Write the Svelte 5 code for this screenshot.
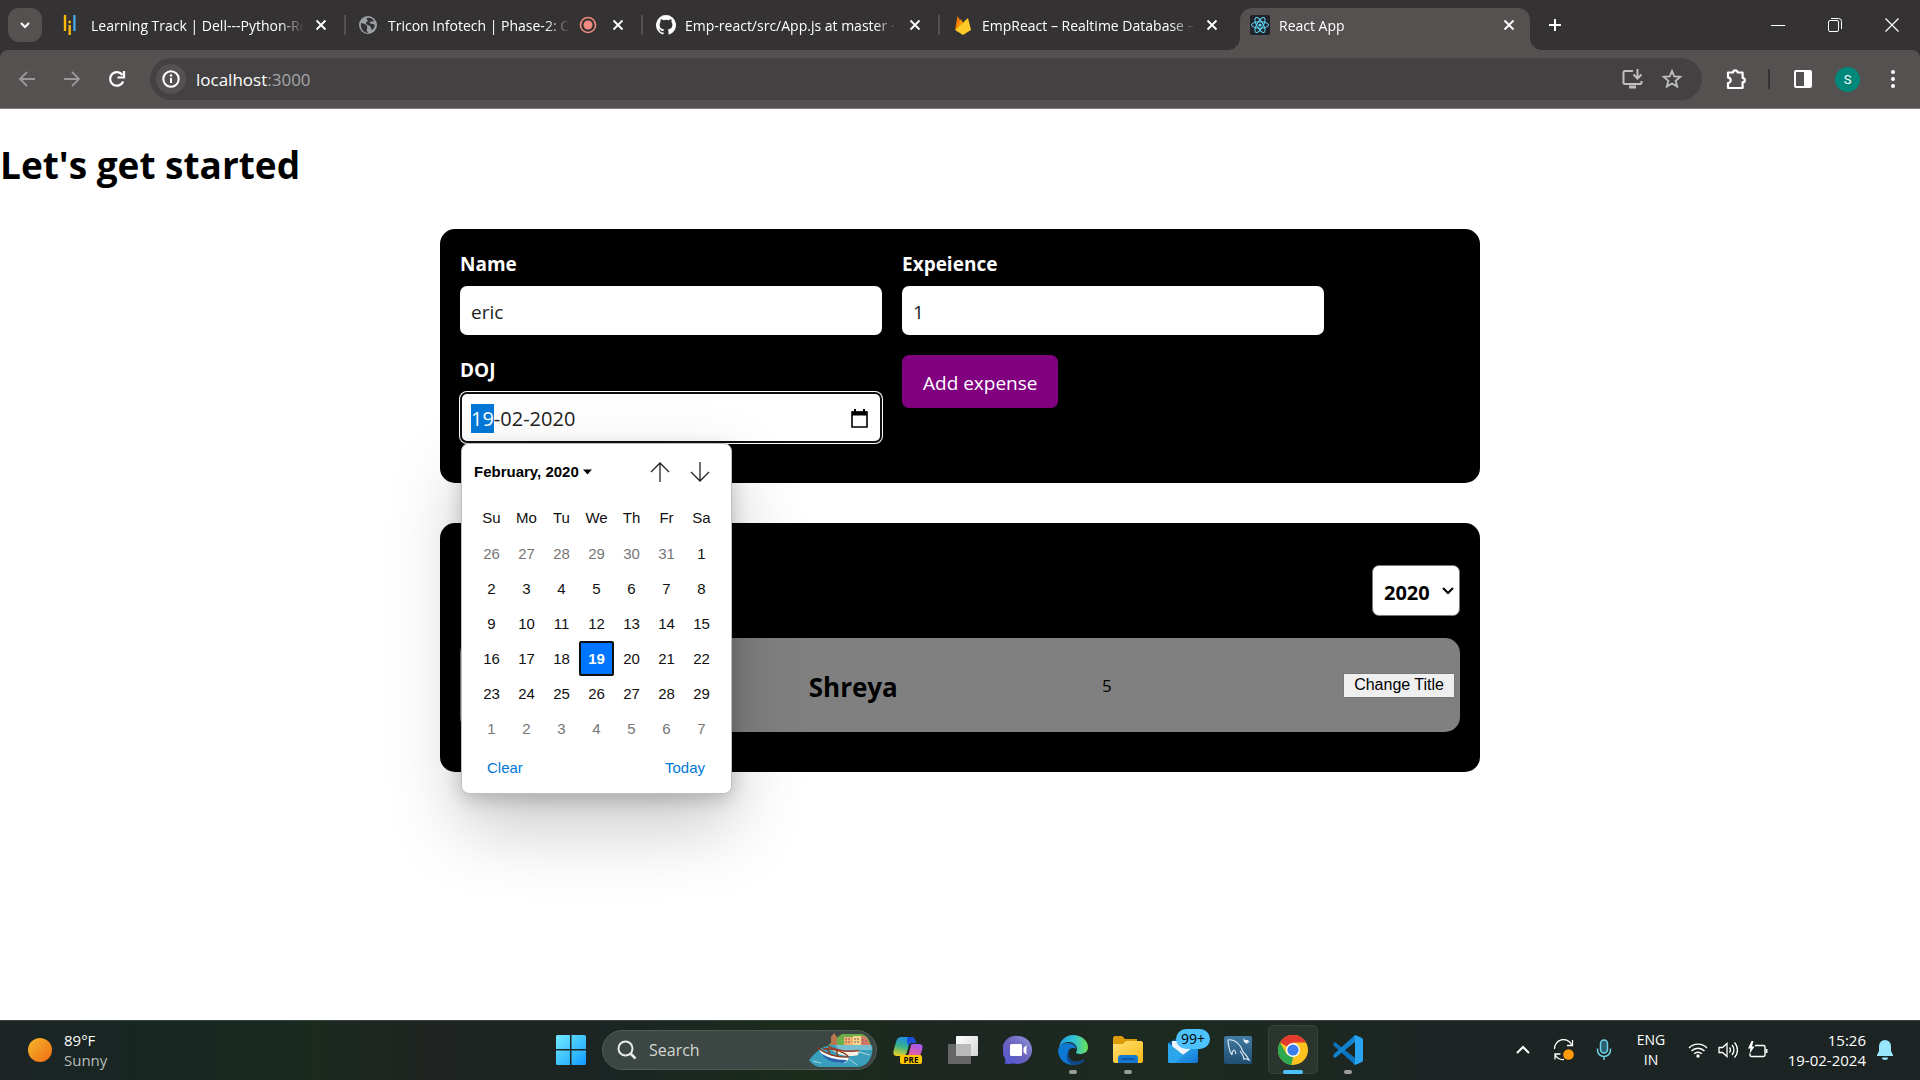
<script>
  import { onMount } from 'svelte';

  const tabs = [
    { icon: 'track', title: 'Learning Track | Dell---Python-React' },
    { icon: 'globe', title: 'Tricon Infotech | Phase-2: Crud', recording: true },
    { icon: 'github', title: 'Emp-react/src/App.js at master · Emp' },
    { icon: 'firebase', title: 'EmpReact – Realtime Database – Fire' },
    { icon: 'react', title: 'React App', active: true }
  ];

  const weekdays = ['Su', 'Mo', 'Tu', 'We', 'Th', 'Fr', 'Sa'];
  // 42 cells, beginning on Sunday 26 January 2020
  const start = new Date(2020, 0, 26);
  const weeks = Array.from({ length: 6 }, (_, w) =>
    Array.from({ length: 7 }, (_, d) => {
      const date = new Date(start.getFullYear(), start.getMonth(), start.getDate() + w * 7 + d);
      return { day: date.getDate(), inMonth: date.getMonth() === 1 };
    })
  );

  const apps = [
    { id: 'copilot', label: 'Copilot' },
    { id: 'taskview', label: 'Task view' },
    { id: 'chat', label: 'Chat' },
    { id: 'edge', label: 'Edge', running: true },
    { id: 'files', label: 'File Explorer', running: true },
    { id: 'mail', label: 'Mail', badge: '99+' },
    { id: 'mysql', label: 'MySQL Workbench' },
    { id: 'chrome', label: 'Chrome', active: true },
    { id: 'vscode', label: 'VS Code', running: true }
  ];

  let name = $state('eric');
  let experience = $state('1');
  let doj = $state('19-02-2020');
  let year = $state('2020');
  let selected = $state(19);
  let dateField;

  onMount(() => {
    dateField.focus();
    dateField.setSelectionRange(0, 2);
  });
</script>

{#snippet favicon(id)}
  <svg class="favicon" viewBox="0 0 20 20" aria-hidden="true">
    {#if id === 'track'}
      <path d="M3 0v16" stroke="#f9ba0b" stroke-width="2.4" />
      <path d="M12.400 0v16" stroke="#47a5dd" stroke-width="2.400" />
      <path d="M7.700 10v10" stroke="#f9ba0b" stroke-width="2.400" />
      <circle cx="7.700" cy="7" r="1.400" fill="#f9ba0b" />
    {:else if id === 'globe'}
      <circle cx="9" cy="10" r="9" fill="#9aa0a6" />
      <path d="M2 8c2 0 5 1 6 3s-1 3 0 5l1 2c-4 0-8-4-7-10zM8 3c3-1 6 1 7 3-1 1-3 0-4 1s1 2 3 2 2 2 1 4l-2 2c-1-1-1-3-2-4s-4-1-4-3 2-1 2-2-2-1-1-3z" fill="#353233" />
    {:else if id === 'github'}
      <path fill="#fff" d="M10 0a10 10 0 0 0-3.160 19.490c.5.090.680-.220.680-.480v-1.700c-2.780.600-3.370-1.340-3.370-1.340-.450-1.150-1.110-1.460-1.110-1.460-.910-.620.070-.610.070-.610 1 .070 1.530 1.030 1.530 1.030.890 1.530 2.340 1.090 2.910.830.090-.650.350-1.090.640-1.340-2.220-.250-4.560-1.110-4.560-4.940 0-1.090.390-1.980 1.030-2.680-.100-.250-.450-1.270.100-2.650 0 0 .840-.270 2.750 1.020a9.600 9.600 0 0 1 5 0c1.910-1.290 2.750-1.020 2.750-1.020.550 1.380.200 2.400.100 2.650.640.700 1.030 1.590 1.030 2.680 0 3.840-2.340 4.690-4.570 4.930.360.310.680.920.680 1.850v2.740c0 .270.180.580.690.480A10 10 0 0 0 10 0z" />
    {:else if id === 'firebase'}
      <path d="M2 15 4.500 1l3 5z" fill="#f57c00" />
      <path d="m2 15 6-11 2 4z" fill="#ff9800" />
      <path d="M2 15 15 3l3 12-8 5z" fill="#ffca28" />
    {:else}
      <rect width="20" height="20" rx="2" fill="#20232a" />
      <g fill="none" stroke="#61dafb" stroke-width="1">
        <ellipse cx="10" cy="10" rx="8.500" ry="3.200" />
        <ellipse cx="10" cy="10" rx="8.500" ry="3.200" transform="rotate(60 10 10)" />
        <ellipse cx="10" cy="10" rx="8.500" ry="3.200" transform="rotate(120 10 10)" />
      </g>
      <circle cx="10" cy="10" r="1.600" fill="#61dafb" />
    {/if}
  </svg>
{/snippet}

{#snippet appIcon(id)}
  <svg class="app-icon" viewBox="0 0 30 30" aria-hidden="true">
    {#if id === 'copilot'}
      <path d="M9 2h9c3 0 4 2 5 6h-4c-3 0-3 2-4 5l-1 4c-1 3-3 4-5 4H4c-4 0-4-3-3-7l2-7c1-4 3-5 6-5z" fill="url(#cp-a)" />
      <path d="M15 2h3c3 0 4 2 5 6h-4c-2 0-3 1-4 3l-1-5c0-2 0-3 1-4z" fill="#1a50d8" />
      <path d="M19 9h7c4 0 4 3 3 6l-2 6H13c3 0 3-3 4-7 1-3 1-5 2-5z" fill="url(#cp-b)" />
      <rect x="7" y="20" width="22" height="9" rx="2" fill="#ffc900" />
      <text x="18" y="27.500" text-anchor="middle" class="pre">PRE</text>
    {:else if id === 'taskview'}
      <rect x="8" y="1" width="22" height="20" rx="1" fill="url(#tv-a)" />
      <rect x="0" y="9" width="23" height="20" rx="1" fill="#666" />
      <path d="M8 9h15v12H8z" fill="#b9b9b9" />
    {:else if id === 'chat'}
      <path d="M15 1a14 14 0 1 1-4 27.400c-3 .6-7 .6-9.500.200 1-1.500 1-3.500.600-5.200A14 14 0 0 1 15 1z" fill="url(#ch-a)" />
      <rect x="7" y="9" width="12" height="12" rx="1.500" fill="#fff" />
      <path d="m20.500 13 3-3v10l-3-3z" fill="#fff" />
    {:else if id === 'edge'}
      <path d="M1 13C2 5 8 0 15 0c8 0 15 5 15 12 0 5-4 7-8 7-3 0-4-1-4-2 1-1 1-2 1-3 0-4-4-7-8-7-4 0-8 2-10 6z" fill="url(#ed-a)" />
      <path d="M0 15C1 11 5 8 9 8c5 0 9 2 9 6-1-1-2-1-3-1-3 0-5 2-5 6 0 5 4 9 8 10-9 3-18-4-18-14z" fill="#0c78d2" />
      <path d="M11 16c-3 8 5 13 13 9 2-1 3 0 2 1-3 3-6 4-9 4-7 0-11-7-6-14z" fill="#114a8b" />
    {:else if id === 'files'}
      <path d="M0 3c0-1 1-2 2-2h7l3 3h12v8H0z" fill="#dc9b08" />
      <path d="M0 9h10l3-3h15c1 0 2 1 2 2v18c0 1-1 2-2 2H2c-1 0-2-1-2-2z" fill="url(#fi-a)" />
      <path d="M5 28v-5c0-2 1-3 3-3h14c2 0 3 1 3 3v5z" fill="#1479cf" />
      <path d="M8.500 24h13" stroke="#0d4f91" stroke-width="1.500" />
    {:else if id === 'mail'}
      <path d="M0 8 15 0l15 8v4L15 20 0 12z" fill="#0a5ba5" />
      <path d="M4 6h22v8l-11 6L4 12z" fill="#eef4fa" />
      <path d="M0 8l15 12L30 8v18c0 1-1 2-2 2H2c-1 0-2-1-2-2z" fill="url(#ma-a)" />
      <path d="m0 8 15 12-8 8H2c-1 0-2-1-2-2z" fill="#2ba6ec" />
    {:else if id === 'mysql'}
      <rect x="1" y="1" width="28" height="28" rx="2" fill="url(#my-a)" />
      <path d="M9 20C6 16 5 8 5 5c5-1 10 3 13 7 1 3 2 6 4 7 2 2 3 4 4 6-2-1-4-2-5-1 0-3-2-5-4-8M9 20c0-3 1-5 2-5s2 4 2 4" fill="none" stroke="#e6eef5" stroke-width="1.100" />
      <path d="m20 3 2 2h3l2 3-2-1-1 2-3-2z" fill="#e6eef5" />
    {:else if id === 'chrome'}
      <circle cx="15" cy="15" r="15" fill="#fcc31e" />
      <path d="M15 15 2 7.500A15 15 0 0 1 28 7.500H15z" fill="#e33b2e" />
      <path d="M2 7.500 8.500 19 15 22l-1.500 8A15 15 0 0 1 2 7.500z" fill="#2da94f" />
      <path d="m21.500 18.700-6.500 11.300h-1.600L17 20z" fill="#fcc31e" />
      <circle cx="15" cy="15" r="7" fill="#fff" />
      <circle cx="15" cy="15" r="5.600" fill="#3b7ded" />
    {:else}
      <path d="m0 9 2-2 20 16v7L1 11z" fill="#0a74bd" />
      <path d="m0 21 2 2L22 7V0L1 19z" fill="#1283cf" />
      <path d="m22 0 6 2.500c1 .5 2 1 2 2.500v20c0 1.500-1 2-2 2.500L22 30c-1-1 0-3 0-5V5c0-2-1-4 0-5z" fill="#27a4f2" />
    {/if}
  </svg>
{/snippet}

<svg class="defs" width="0" height="0" aria-hidden="true">
  <defs>
    <linearGradient id="cp-a" x1="0.5" y1="0" x2="0.2" y2="1"><stop offset="0" stop-color="#1f8fe8" /><stop offset=".5" stop-color="#38b28a" /><stop offset="1" stop-color="#f2d321" /></linearGradient>
    <linearGradient id="cp-b" x1="0.7" y1="0" x2="0.3" y2="1"><stop offset="0" stop-color="#a558f0" /><stop offset="1" stop-color="#f0609a" /></linearGradient>
    <linearGradient id="tv-a" x1="0" y1="0" x2="1" y2="1"><stop offset="0" stop-color="#fff" /><stop offset="1" stop-color="#d5d5d5" /></linearGradient>
    <linearGradient id="ch-a" x1="1" y1="0" x2="0" y2="1"><stop offset="0" stop-color="#8f95dc" /><stop offset=".5" stop-color="#6b62bd" /><stop offset="1" stop-color="#4f56d6" /></linearGradient>
    <linearGradient id="ed-a"><stop offset="0" stop-color="#1b9de2" /><stop offset=".55" stop-color="#35c3d4" /><stop offset="1" stop-color="#6be04f" /></linearGradient>
    <linearGradient id="fi-a" x1="0" y1="0" x2="1" y2="1"><stop offset="0" stop-color="#ffdf73" /><stop offset="1" stop-color="#fbb915" /></linearGradient>
    <linearGradient id="ma-a" x1="0" y1="0" x2="1" y2="1"><stop offset="0" stop-color="#3ac0fa" /><stop offset="1" stop-color="#1477d4" /></linearGradient>
    <linearGradient id="my-a" x1="0" y1="0" x2="0" y2="1"><stop offset="0" stop-color="#427ba4" /><stop offset="1" stop-color="#1f4e72" /></linearGradient>
    <linearGradient id="sun-a" x1="0" y1="0" x2="1" y2="1"><stop offset="0" stop-color="#f3b92c" /><stop offset="1" stop-color="#f26a12" /></linearGradient>
    <linearGradient id="win-a" x1="0" y1="0" x2="1" y2="1"><stop offset="0" stop-color="#73ecff" /><stop offset="1" stop-color="#109bff" /></linearGradient>
  </defs>
</svg>

<div class="screen">
  <header class="browser">
    <div class="tab-strip">
      <button class="tab-search" aria-label="Search tabs">
        <svg width="12" height="12" viewBox="0 0 12 12"><path d="m2 4 4 4 4-4" fill="none" stroke="#fff" stroke-width="2" /></svg>
      </button>
      <div class="tabs">
        {#each tabs as tab, i}
          <div class="tab" class:active={tab.active} class:divided={i > 0 && !tab.active}>
            {@render favicon(tab.icon)}
            <span class="tab-title">{tab.title}</span>
            {#if tab.recording}
              <svg class="rec" width="18" height="18" viewBox="0 0 18 18" aria-hidden="true"><circle cx="9" cy="9" r="7.500" fill="none" stroke="#f28b82" stroke-width="1.600" /><circle cx="9" cy="9" r="4.500" fill="#f28b82" /></svg>
            {/if}
            <button class="tab-close" aria-label="Close tab">
              <svg width="12" height="12" viewBox="0 0 12 12"><path d="m1.500 1.500 9 9m0-9-9 9" stroke="#fff" stroke-width="1.800" /></svg>
            </button>
          </div>
        {/each}
      </div>
      <button class="new-tab" aria-label="New tab">
        <svg width="14" height="14" viewBox="0 0 14 14"><path d="M7 1v12M1 7h12" stroke="#fff" stroke-width="2" /></svg>
      </button>
      <div class="window-controls">
        <button aria-label="Minimize"><svg width="14" height="14" viewBox="0 0 14 14"><path d="M0 7.500h14" stroke="#fff" /></svg></button>
        <button aria-label="Restore"><svg width="14" height="14" viewBox="0 0 14 14" fill="none" stroke="#fff"><rect x=".5" y="2.500" width="10" height="11" rx="1.500" /><path d="M3 .5h7.500a3 3 0 0 1 3 3V11" /></svg></button>
        <button aria-label="Close"><svg width="14" height="14" viewBox="0 0 14 14"><path d="m.5.500 13 13m0-13-13 13" stroke="#fff" stroke-width="1.200" /></svg></button>
      </div>
    </div>

    <div class="toolbar">
      <button class="tool dim" aria-label="Back"><svg width="18" height="18" viewBox="0 0 18 18" fill="none" stroke="currentColor" stroke-width="1.800"><path d="M17 9H2m7-7L2 9l7 7" /></svg></button>
      <button class="tool dim" aria-label="Forward"><svg width="18" height="18" viewBox="0 0 18 18" fill="none" stroke="currentColor" stroke-width="1.800"><path d="M1 9h15M9 2l7 7-7 7" /></svg></button>
      <button class="tool" aria-label="Reload"><svg width="18" height="18" viewBox="0 0 18 18" fill="none" stroke="currentColor" stroke-width="2.200"><path d="M15.200 11.500A6.800 6.800 0 1 1 14.500 5" /><path d="M16 1v6.500H9.500" /></svg></button>
      <div class="address">
        <button class="site-info" aria-label="View site information"><svg width="18" height="18" viewBox="0 0 18 18"><circle cx="9" cy="9" r="7.700" fill="none" stroke="#fff" stroke-width="2" /><path d="M9 8v5" stroke="#fff" stroke-width="2" /><circle cx="9" cy="5.500" r="1.200" fill="#fff" /></svg></button>
        <span class="url">localhost<span>:3000</span></span>
        <button class="addr-btn" aria-label="Install app"><svg width="21" height="20" viewBox="0 0 21 20" fill="none" stroke="currentColor" stroke-width="2"><path d="M11 2H3a1.500 1.500 0 0 0-1.500 1.500v10A1.500 1.500 0 0 0 3 15h15a1.500 1.500 0 0 0 1.500-1.500V12" /><path d="M15.500 0v9m-4-3.500 4 4 4-4" /><path d="M7 18h7" stroke-width="3" /></svg></button>
        <button class="addr-btn" aria-label="Bookmark"><svg width="20" height="20" viewBox="0 0 20 20"><path d="m10 2 2.300 5.400 5.900.500-4.500 3.900 1.400 5.700-5.100-3-5.100 3 1.400-5.700L1.800 7.900l5.900-.5z" fill="none" stroke="currentColor" stroke-width="1.900" /></svg></button>
      </div>
      <button class="tool ext" aria-label="Extensions"><svg width="22" height="22" viewBox="0 0 22 22"><path d="M3 4.500h5.200a2.200 2.200 0 0 1 4.400 0h5V10a2.200 2.200 0 0 1 0 4.400V20H3v-5a2.500 2.500 0 0 0 0-5.400z" fill="none" stroke="currentColor" stroke-width="2.200" stroke-linejoin="round" /></svg></button>
      <span class="divider"></span>
      <button class="tool" aria-label="Side panel"><svg width="18" height="18" viewBox="0 0 18 18"><rect x="1" y="1" width="16" height="16" rx="1" fill="none" stroke="currentColor" stroke-width="2" /><path d="M10 1h7v16h-7z" fill="currentColor" /></svg></button>
      <button class="tool" aria-label="Profile"><span class="avatar">S</span></button>
      <button class="tool" aria-label="Menu"><svg width="6" height="20" viewBox="0 0 6 20" fill="currentColor"><circle cx="3" cy="3" r="2" /><circle cx="3" cy="10" r="2" /><circle cx="3" cy="17" r="2" /></svg></button>
    </div>
  </header>

  <main>
    <h1>Let's get started</h1>

    <form class="card form-card" onsubmit={(e) => e.preventDefault()}>
      <div class="control">
        <label for="name">Name</label>
        <input id="name" class="box" type="text" bind:value={name} />
      </div>
      <div class="control">
        <label for="experience">Expeience</label>
        <input id="experience" class="box" type="text" bind:value={experience} />
      </div>
      <div class="control">
        <label for="doj">DOJ</label>
        <div class="box date-box">
          <input id="doj" type="text" bind:value={doj} bind:this={dateField} />
          <button type="button" class="picker" aria-label="Show date picker">
            <svg width="17" height="19" viewBox="0 0 17 19"><path d="M1 3h15v15H1z" fill="none" stroke="#000" stroke-width="1.600" /><path d="M1 2.500h15V6.500H1z" fill="#000" /><path d="M4 0v3M13 0v3" stroke="#000" stroke-width="2" /></svg>
          </button>

          <div class="calendar">
            <div class="cal-head">
              <button type="button" class="month">February, 2020 <svg width="9" height="6" viewBox="0 0 9 6"><path d="M0 .5h9L4.500 5.500z" /></svg></button>
              <button type="button" class="step" aria-label="Previous month"><svg width="20" height="20" viewBox="0 0 20 20" fill="none" stroke="#222" stroke-width="1.300"><path d="M10 20V1M1 10l9-9 9 9" /></svg></button>
              <button type="button" class="step" aria-label="Next month"><svg width="20" height="20" viewBox="0 0 20 20" fill="none" stroke="#222" stroke-width="1.300"><path d="M10 0v19M1 10l9 9 9-9" /></svg></button>
            </div>
            <table>
              <thead>
                <tr>{#each weekdays as day}<th>{day}</th>{/each}</tr>
              </thead>
              <tbody>
                {#each weeks as week}
                  <tr>
                    {#each week as cell}
                      <td>
                        <button
                          type="button"
                          class="day"
                          class:outside={!cell.inMonth}
                          class:selected={cell.inMonth && cell.day === selected}
                          onclick={() => cell.inMonth && (selected = cell.day)}>{cell.day}</button>
                      </td>
                    {/each}
                  </tr>
                {/each}
              </tbody>
            </table>
            <div class="cal-foot">
              <button type="button">Clear</button>
              <button type="button">Today</button>
            </div>
          </div>
        </div>
      </div>
      <div class="actions">
        <button type="submit" class="add">Add expense</button>
      </div>
    </form>

    <section class="card list-card">
      <div class="filter">
        <div class="select-wrap">
          <select aria-label="Filter by year" bind:value={year}>
            <option>2020</option>
            <option>2021</option>
            <option>2022</option>
          </select>
          <svg width="12" height="8" viewBox="0 0 12 8" aria-hidden="true"><path d="m1 1 5 5 5-5" fill="none" stroke="#000" stroke-width="2" /></svg>
        </div>
      </div>
      <article class="item">
        <h2>Shreya</h2>
        <span class="exp">5</span>
        <button class="change">Change Title</button>
      </article>
    </section>
  </main>

  <footer class="taskbar">
    <button class="weather">
      <svg width="24" height="24" viewBox="0 0 24 24" aria-hidden="true"><circle cx="12" cy="12" r="12" fill="url(#sun-a)" /></svg>
      <span class="lines"><span>89°F</span><span class="muted">Sunny</span></span>
    </button>

    <nav class="dock">
      <button class="slot" aria-label="Start">
        <svg width="30" height="30" viewBox="0 0 30 30"><path d="M0 1.500A1.500 1.500 0 0 1 1.500 0H14v14H0zM15.500 0h13A1.500 1.500 0 0 1 30 1.500V14H15.500zM0 15.500h14V30H1.500A1.500 1.500 0 0 1 0 28.500zM15.500 15.500H30v13a1.500 1.500 0 0 1-1.500 1.500h-13z" fill="url(#win-a)" /></svg>
      </button>
      <button class="search">
        <svg width="20" height="20" viewBox="0 0 20 20" fill="none" stroke="#e8eaea" stroke-width="2"><circle cx="8.500" cy="8.500" r="7" /><path d="m13.500 13.500 5 5" stroke-width="2.600" /></svg>
        <span>Search</span>
        <svg class="boats" width="64" height="34" viewBox="0 0 64 34" aria-hidden="true">
          <path d="M19 12c5-3 9-8 14-11h20c6 2 8 7 9 12z" fill="#6cae4a" />
          <path d="M22 12V4l3-4 3 4v8z" fill="#b9774f" />
          <path d="M35 4h9v9h-9z" fill="#f0b06f" />
          <path d="M44 3h8v10h-8z" fill="#f4d68d" />
          <path d="M52 3l5 1 5 9H52z" fill="#d97a6b" />
          <path d="M37 5v6m3-6v6m6-6v6m3-6v6m5-5v5m3-4v4" stroke="#a5685f" stroke-width="1.200" stroke-dasharray="2 1" />
          <path d="M0 27c5-6 12-14 22-15h41c2 8-2 18-10 22H10C5 33 2 30 0 27z" fill="#3a9fbd" />
          <path d="M26 12h36l1 5H30z" fill="#77bfd0" />
          <path d="M19 14c8 4 20 6 31 4l-1 4c-6 2-14 1-20-1z" fill="#f6efe4" />
          <path d="M19 13.500c8 3.500 20 6 31 4" fill="none" stroke="#a33f2a" stroke-width="1.600" />
          <path d="M10 16c6 5 18 9 30 8-1 4-3 6-6 6-10 0-20-4-24-14z" fill="#fff" />
          <path d="M12 20c5 4 14 7 26 7-1 2-3 3-5 3-9 0-17-3-21-10z" fill="#2a63ad" />
          <path d="M9 15c6 5 18 10 31 9M14 16c6-1 18 1 25 7M18 16l3 4m6-3 2 6" fill="none" stroke="#8e3d22" stroke-width="1.400" />
          <path d="m40 26 8 6M4 28l8 2m38-11 11 3" stroke="#cde6dc" stroke-width=".8" fill="none" />
        </svg>
      </button>
      {#each apps as app}
        <button class="slot" class:current={app.active} aria-label={app.label}>
          {@render appIcon(app.id)}
          {#if app.badge}<span class="badge">{app.badge}</span>{/if}
          {#if app.running || app.active}<span class="mark"></span>{/if}
        </button>
      {/each}
    </nav>

    <div class="tray">
      <button class="chevron" aria-label="Show hidden icons"><svg width="16" height="10" viewBox="0 0 16 10"><path d="m2 8 6-6 6 6" fill="none" stroke="#fff" stroke-width="2" /></svg></button>
      <button class="sync" aria-label="Updates"><svg width="22" height="22" viewBox="0 0 22 22" fill="none" stroke="#fff" stroke-width="1.300"><path d="M1.500 10A9 9 0 0 1 18.500 5.500M19.500 1v5.500H14M2 20.500V15h5.500M2 15.500a9 9 0 0 0 9 5" /><circle cx="15.500" cy="15.500" r="5.300" fill="#ff9a0a" stroke="none" /></svg></button>
      <button class="mic" aria-label="Microphone"><svg width="18" height="22" viewBox="0 0 18 22" fill="none" stroke="#6fd0e6" stroke-width="1.500"><rect x="5.500" y="1" width="7" height="13" rx="3.500" fill="#2a6170" /><path d="M2.500 9.500v1.500a6.500 6.500 0 0 0 13 0V9.500M9 17.500V21" /></svg></button>
      <button class="lines lang"><span>ENG</span><span>IN</span></button>
      <button class="status" aria-label="Network, sound and battery">
        <svg width="20" height="16" viewBox="0 0 20 16" fill="none" stroke="#fff" stroke-width="1.400"><path d="M1 6a12.500 12.500 0 0 1 18 0M3.500 9a9 9 0 0 1 13 0M6.200 11.800a5.500 5.500 0 0 1 7.600 0" /><circle cx="10" cy="14" r="1.700" fill="#fff" stroke="none" /></svg>
        <svg width="20" height="18" viewBox="0 0 20 18" fill="none" stroke="#fff" stroke-width="1.300"><path d="M1 6.500h3.500L9 2.500v13l-4.500-4H1z" /><path d="M11.500 6.500a4 4 0 0 1 0 5M14 4a7.500 7.500 0 0 1 0 10M16.500 1.500a11 11 0 0 1 0 15" /></svg>
        <svg width="20" height="18" viewBox="0 0 20 18" fill="none" stroke="#fff" stroke-width="1.400"><path d="M7 4.500h8.500A1.500 1.500 0 0 1 17 6v8a1.500 1.500 0 0 1-1.500 1.500H3.500A1.500 1.500 0 0 1 2 14v-1.500" /><path d="M18.500 8v4" stroke-width="2" /><path d="M3.500 0 0 7.500h2.500L1.500 13 6.500 5.500H4L5.500 0z" fill="#fff" stroke="none" /></svg>
      </button>
      <button class="lines clock"><span>15:26</span><span>19-02-2024</span></button>
      <button class="bell" aria-label="Notifications"><svg width="16" height="20" viewBox="0 0 16 20" fill="#97e6fb"><path d="M8 0a6 6 0 0 1 6 6v5l2 4v1H0v-1l2-4V6a6 6 0 0 1 6-6zM5 17.500h6a3 2.500 0 0 1-6 0z" /></svg></button>
    </div>
  </footer>
</div>

<style>
  :global(body) {
    background: #fff;
  }

  .defs {
    position: absolute;
  }

  .screen {
    --ui: 'Open Sans', 'Noto Sans', sans-serif;
    --arial: 'Liberation Sans', Arial, sans-serif;
    display: flex;
    flex-direction: column;
    min-height: 100vh;
    font-family: var(--ui);
    color: #000;
  }

  .screen *,
  .screen *::before,
  .screen *::after {
    box-sizing: border-box;
  }

  button {
    padding: 0;
    border: 0;
    background: none;
    color: inherit;
    font: inherit;
  }

  svg {
    display: block;
    flex: none;
  }

  /* Browser chrome */
  .browser {
    background: #353233;
    color: #fff;
  }

  .tab-strip {
    display: flex;
    align-items: center;
    height: 50px;
    padding-left: 8px;
  }

  .tab-search {
    display: grid;
    place-items: center;
    flex: none;
    width: 34px;
    height: 34px;
    margin-right: 6px;
    border-radius: 11px;
    background: #555150;
  }

  .tabs {
    display: flex;
    flex: 0 1 1485px;
    min-width: 0;
    align-self: stretch;
  }

  .tab {
    position: relative;
    display: flex;
    flex: 1 1 0;
    align-items: center;
    gap: 9px;
    min-width: 0;
    padding: 0 16px 0 14px;
    font-size: 14px;
  }

  .tab.divided::before {
    content: '';
    position: absolute;
    left: -1px;
    top: 15px;
    width: 2px;
    height: 20px;
    background: #555150;
  }

  .tab.active {
    isolation: isolate;
  }

  .tab.active::before {
    content: '';
    position: absolute;
    z-index: -1;
    inset: 8px 3px 0 4px;
    border-radius: 12px 12px 0 0;
    background: #555150;
  }

  .tab.active::after {
    content: '';
    position: absolute;
    z-index: -1;
    inset: auto -9px 0 -8px;
    height: 12px;
    background:
      radial-gradient(circle at 0 0, transparent 12px, #555150 12px) left / 12px 12px no-repeat,
      radial-gradient(circle at 100% 0, transparent 12px, #555150 12px) right / 12px 12px no-repeat;
  }

  .favicon {
    width: 20px;
    height: 20px;
  }

  .tab-title {
    flex: 1;
    overflow: hidden;
    white-space: nowrap;
    mask-image: linear-gradient(to left, transparent, #000 24px);
  }

  .rec {
    margin-right: 4px;
  }

  .tab-close {
    display: grid;
    place-items: center;
    width: 16px;
    height: 20px;
  }

  .new-tab {
    display: grid;
    place-items: center;
    width: 34px;
    height: 34px;
    margin-left: 5px;
  }

  .window-controls {
    display: flex;
    align-self: stretch;
    margin-left: auto;
  }

  .window-controls button {
    display: grid;
    place-items: center;
    width: 57px;
  }

  .toolbar {
    display: flex;
    align-items: center;
    height: 59px;
    padding: 0 5px 0 4px;
    border-bottom: 1px solid #857d7e;
    border-radius: 8px 8px 0 0;
    background: #555150;
  }

  .tool {
    display: grid;
    place-items: center;
    flex: none;
    width: 45px;
    height: 42px;
  }

  .dim {
    color: #98979a;
  }

  .address {
    display: flex;
    flex: 1;
    align-items: center;
    height: 42px;
    margin-left: 11px;
    padding: 0 10px 0 6px;
    border-radius: 21px;
    background: #434142;
  }

  .site-info {
    display: grid;
    place-items: center;
    width: 30px;
    height: 30px;
    border-radius: 50%;
    background: #555150;
  }

  .url {
    flex: 1;
    padding-left: 10px;
    font-size: 17px;
  }

  .url span {
    color: #a5a7aa;
  }

  .addr-btn {
    display: grid;
    place-items: center;
    width: 40px;
    height: 40px;
    color: #c0bebf;
  }

  .ext {
    margin-left: 11px;
  }

  .divider {
    width: 2px;
    height: 20px;
    margin: 0 10px;
    background: #353233;
  }

  .avatar {
    display: grid;
    place-items: center;
    width: 25px;
    height: 25px;
    border-radius: 50%;
    background: #00897b;
    font: 13px/25px Roboto, sans-serif;
  }

  /* Page */
  main {
    flex: 1;
  }

  h1 {
    margin: 29px 0 38px;
    font-size: 37px;
    line-height: 53px;
    font-weight: 700;
  }

  .card {
    max-width: 1040px;
    margin: 0 auto 40px;
    padding: 20px;
    border-radius: 15px;
    background: #000;
  }

  .form-card {
    display: flex;
    flex-wrap: wrap;
    gap: 20px;
    padding-bottom: 40px;
  }

  .control {
    width: 422px;
    max-width: 100%;
  }

  .form-card label {
    display: block;
    margin-bottom: 6px;
    color: #fff;
    font-size: 19px;
    line-height: 31px;
    font-weight: 700;
  }

  .box {
    display: block;
    width: 100%;
    height: 49px;
    padding: 2px 11px 0;
    border: 0;
    border-radius: 7px;
    outline: 0;
    background: #fff;
    color: #222;
    font: 19px/27px var(--ui);
  }

  .date-box {
    position: relative;
    display: flex;
    align-items: center;
    height: 51px;
    padding: 1px 14px 0 11px;
    box-shadow: inset 0 0 0 2px #101010, 0 0 0 1px #fff;
  }

  .date-box input {
    flex: 1;
    min-width: 0;
    height: 29px;
    padding: 0;
    border: 0;
    outline: 0;
    background: none;
    color: #222;
    font: 20px/29px var(--ui);
    caret-color: transparent;
  }

  .date-box input::selection {
    background: #0078d7;
    color: #fff;
  }

  .calendar {
    position: absolute;
    z-index: 5;
    top: 51px;
    left: 1px;
    width: 271px;
    padding: 8px 12px 11px;
    border: 1px solid #bfbfbf;
    border-radius: 8px;
    background: #fff;
    box-shadow: 0 32px 72px rgba(0, 0, 0, 0.22), 0 6px 18px rgba(0, 0, 0, 0.18);
    color: #101010;
    font: 15px/20px var(--arial);
  }

  .cal-head {
    display: flex;
    align-items: center;
    gap: 2px;
    height: 40px;
  }

  .month {
    display: flex;
    flex: 1;
    align-items: center;
    gap: 4px;
    color: #000;
    font-size: 15px;
    font-weight: 700;
    white-space: nowrap;
  }

  .step {
    display: grid;
    place-items: center;
    width: 38px;
    height: 40px;
  }

  .calendar table {
    width: 245px;
    margin-top: 7px;
    border-collapse: collapse;
    table-layout: fixed;
  }

  .calendar th {
    height: 37px;
    padding: 0;
    font-weight: 400;
  }

  .calendar td {
    padding: 0;
  }

  .day {
    display: block;
    width: 35px;
    height: 35px;
    border-radius: 2px;
  }

  .outside {
    color: #767676;
  }

  .selected {
    border: 2px solid #101010;
    background: #0075ff;
    color: #fff;
    font-weight: 700;
  }

  .cal-foot {
    display: flex;
    justify-content: space-between;
    padding: 12px 14px 4px 13px;
    color: #0078d7;
  }

  .add {
    height: 53px;
    padding: 2px 21px 0;
    border-radius: 7px;
    background: #800080;
    color: #fff;
    font-size: 19px;
  }

  .filter {
    display: flex;
    justify-content: flex-end;
    padding-top: 22px;
  }

  .select-wrap {
    position: relative;
  }

  .select-wrap svg {
    position: absolute;
    top: 22px;
    right: 6px;
    pointer-events: none;
  }

  select {
    display: block;
    width: 88px;
    height: 51px;
    padding: 3px 10px 0 11px;
    border: 1px solid #767676;
    border-radius: 7px;
    background: #fff;
    color: #000;
    font: 700 20px/27px var(--ui);
    appearance: none;
  }

  .item {
    display: grid;
    grid-template-columns: 44% 42% 1fr;
    align-items: center;
    min-height: 94px;
    margin: 22px 0 20px;
    padding-right: 5px;
    border-radius: 15px;
    background: #808080;
  }

  h2 {
    margin: 0;
    padding-top: 3px;
    justify-self: end;
    font-size: 26px;
  }

  .exp {
    justify-self: center;
    font-size: 17px;
  }

  .change {
    justify-self: end;
    height: 25px;
    padding: 0 10px;
    border: 1px solid #767676;
    border-radius: 1px;
    background: #efefef;
    color: #000;
    font: 16px/20px var(--arial);
    white-space: nowrap;
  }

  /* Taskbar */
  .taskbar {
    display: grid;
    grid-template-columns: 1fr auto 1fr;
    align-items: center;
    height: 60px;
    padding-bottom: 2px;
    border-top: 1px solid #3b4745;
    background: linear-gradient(90deg, #1c2424 0, #172622 8%, #1b2a1f 16%, #1f2421 22%, #1b2523 32%, #1b2c1c 42%, #1e2622 50%, #1c2a20 62%, #1c2523 74%, #1c2423 100%);
    color: #fff;
    font-size: 15px;
    line-height: 20px;
  }

  .weather {
    display: flex;
    align-items: center;
    justify-self: start;
    gap: 12px;
    padding-left: 28px;
    text-align: left;
  }

  .lines {
    display: flex;
    flex-direction: column;
    font-size: 15px;
  }

  .muted {
    color: #b9bfbe;
  }

  .dock {
    display: flex;
    align-items: center;
    padding-right: 2px;
  }

  .slot {
    position: relative;
    display: grid;
    place-items: center;
    width: 55px;
    height: 57px;
  }

  .current::before {
    content: '';
    position: absolute;
    inset: 4px 2px 4px 3px;
    border: 1px solid #37423b;
    border-radius: 5px;
    background: #2a352e;
  }

  .app-icon {
    position: relative;
    width: 30px;
    height: 30px;
  }

  .pre {
    font: 700 8px 'Open Sans', sans-serif;
  }

  .badge {
    position: absolute;
    top: 8px;
    left: 21px;
    width: 34px;
    border-radius: 10px;
    background: #4cc2ff;
    color: #000;
    font-size: 14px;
    line-height: 20px;
  }

  .mark {
    position: absolute;
    bottom: 4px;
    width: 8px;
    height: 4px;
    border-radius: 2px;
    background: #9a9d9c;
  }

  .current .mark {
    width: 20px;
    background: #4cc2ff;
  }

  .search {
    display: flex;
    align-items: center;
    width: 275px;
    height: 40px;
    margin: 0 3px 0 4px;
    padding: 0 3px 0 14px;
    border: 1px solid #525b56;
    border-radius: 20px;
    background: #3c4642;
    overflow: hidden;
  }

  .search span {
    flex: 1;
    padding-left: 12px;
    color: #d3d6d4;
    font-size: 16px;
    text-align: left;
  }

  .boats {
    border-radius: 0 16px 16px 0;
  }

  .tray {
    display: flex;
    align-items: center;
    justify-content: flex-end;
    padding-right: 27px;
  }

  .chevron {
    margin-right: 22px;
  }

  .sync {
    margin-right: 20px;
  }

  .mic {
    margin-right: 13px;
  }

  .lang {
    width: 50px;
    align-items: center;
    margin-right: 12px;
    font-size: 14px;
  }

  .status {
    display: flex;
    align-items: center;
    gap: 10px;
  }

  .clock {
    width: 98px;
    margin-right: 11px;
    align-items: flex-end;
  }
</style>
